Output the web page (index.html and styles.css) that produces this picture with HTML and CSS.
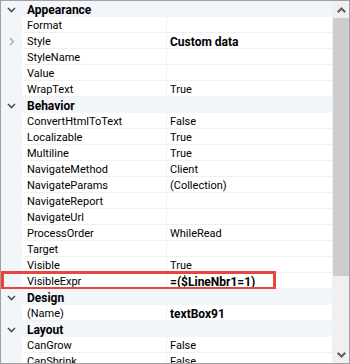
FILE: index.html
```html
<!DOCTYPE html>
<html lang="en">
<head>
  <meta charset="UTF-8">
  <title>Properties</title>
  <link rel="stylesheet" href="styles.css">
</head>
<body>
  <div class="grid">
    <div class="rows">
      <div class="row cat"><span class="margin"><svg class="chev" width="9" height="6" viewBox="0 0 9 6"><polyline points="1,1 4.5,4.5 8,1"/></svg></span><span class="cat-name">Appearance</span></div>
      <div class="row"><span class="margin"></span><span class="name">Format</span><span class="value"></span></div>
      <div class="row"><span class="margin"><svg class="expand" width="6" height="9" viewBox="0 0 6 9"><polyline points="1,1 4.5,4.5 1,8"/></svg></span><span class="name">Style</span><span class="value bold">Custom data</span></div>
      <div class="row"><span class="margin"></span><span class="name">StyleName</span><span class="value"></span></div>
      <div class="row"><span class="margin"></span><span class="name">Value</span><span class="value"></span></div>
      <div class="row"><span class="margin"></span><span class="name">WrapText</span><span class="value">True</span></div>

      <div class="row cat"><span class="margin"><svg class="chev" width="9" height="6" viewBox="0 0 9 6"><polyline points="1,1 4.5,4.5 8,1"/></svg></span><span class="cat-name">Behavior</span></div>
      <div class="row"><span class="margin"></span><span class="name">ConvertHtmlToText</span><span class="value">False</span></div>
      <div class="row"><span class="margin"></span><span class="name">Localizable</span><span class="value">True</span></div>
      <div class="row"><span class="margin"></span><span class="name">Multiline</span><span class="value">True</span></div>
      <div class="row"><span class="margin"></span><span class="name">NavigateMethod</span><span class="value">Client</span></div>
      <div class="row"><span class="margin"></span><span class="name">NavigateParams</span><span class="value">(Collection)</span></div>
      <div class="row"><span class="margin"></span><span class="name">NavigateReport</span><span class="value"></span></div>
      <div class="row"><span class="margin"></span><span class="name">NavigateUrl</span><span class="value"></span></div>
      <div class="row"><span class="margin"></span><span class="name">ProcessOrder</span><span class="value">WhileRead</span></div>
      <div class="row"><span class="margin"></span><span class="name">Target</span><span class="value"></span></div>
      <div class="row"><span class="margin"></span><span class="name">Visible</span><span class="value">True</span></div>
      <div class="row marked"><span class="margin"></span><span class="name">VisibleExpr</span><span class="value bold">=($LineNbr1=1)</span><span class="highlight"></span></div>

      <div class="row cat"><span class="margin"><svg class="chev" width="9" height="6" viewBox="0 0 9 6"><polyline points="1,1 4.5,4.5 8,1"/></svg></span><span class="cat-name">Design</span></div>
      <div class="row"><span class="margin"></span><span class="name">(Name)</span><span class="value bold">textBox91</span></div>

      <div class="row cat"><span class="margin"><svg class="chev" width="9" height="6" viewBox="0 0 9 6"><polyline points="1,1 4.5,4.5 8,1"/></svg></span><span class="cat-name">Layout</span></div>
      <div class="row"><span class="margin"></span><span class="name">CanGrow</span><span class="value">False</span></div>
      <div class="row"><span class="margin"></span><span class="name">CanShrink</span><span class="value">False</span></div>
    </div>

    <div class="scrollbar">
      <span class="arrow"><svg width="9" height="6" viewBox="0 0 9 6"><polygon points="0,4.5 4.5,0 9,4.5 7.5,6 4.5,3 1.5,6"/></svg></span>
      <span class="track"><span class="thumb"></span></span>
      <span class="arrow"><svg width="9" height="6" viewBox="0 0 9 6"><polygon points="0,1.5 4.5,6 9,1.5 7.5,0 4.5,3 1.5,0"/></svg></span>
    </div>
  </div>
</body>
</html>
```

FILE: styles.css
```css
* {
  margin: 0;
  padding: 0;
  box-sizing: border-box;
}

body {
  font-family: Roboto, 'Liberation Sans', sans-serif;
  font-size: 11px;
  color: #000;
  background: #fff;
}

.grid {
  width: 350px;
  height: 364px;
  border: 1px solid #a0a0a0;
  display: flex;
  overflow: hidden;
  background: #fff;
}

.rows {
  width: 331px;
  overflow: hidden;
}

.row {
  display: flex;
  height: 16px;
  position: relative;
}

.margin {
  width: 21px;
  flex-shrink: 0;
  background: #f2f5fa;
  display: flex;
  align-items: center;
  justify-content: center;
  padding-top: 1px;
}

.name,
.value,
.cat-name {
  padding-top: 2px;
  line-height: 14px;
  white-space: nowrap;
}

.name {
  width: 145px;
  padding-left: 5px;
  border-bottom: 1px solid #f0f0f0;
  border-right: 1px solid #f0f0f0;
  overflow: hidden;
}

.value {
  flex: 1;
  padding-left: 3px;
  border-bottom: 1px solid #f0f0f0;
}

.bold {
  font-weight: bold;
  font-size: 12px;
}

/* category header rows */
.cat {
  background: #f2f5fa;
}

.cat-name {
  padding-left: 5px;
  font-weight: bold;
  font-size: 12px;
}

.chev polyline {
  fill: none;
  stroke: #555;
  stroke-width: 1.7;
}

.expand polyline {
  fill: none;
  stroke: #a8a8a8;
  stroke-width: 1.3;
}

.highlight {
  position: absolute;
  left: 0;
  top: -2px;
  width: 275px;
  height: 19px;
  border: 3px solid #e8453c;
}

/* vertical scrollbar */
.scrollbar {
  width: 17px;
  display: flex;
  flex-direction: column;
  background: #f0f0f0;
}

.arrow {
  height: 17px;
  display: flex;
  align-items: center;
  justify-content: center;
  padding-left: 1px;
}

.arrow svg polygon {
  fill: #606060;
}

.track {
  flex: 1;
  padding-left: 1px;
}

.thumb {
  display: block;
  height: 258px;
  background: #cdcdcd;
}
```
